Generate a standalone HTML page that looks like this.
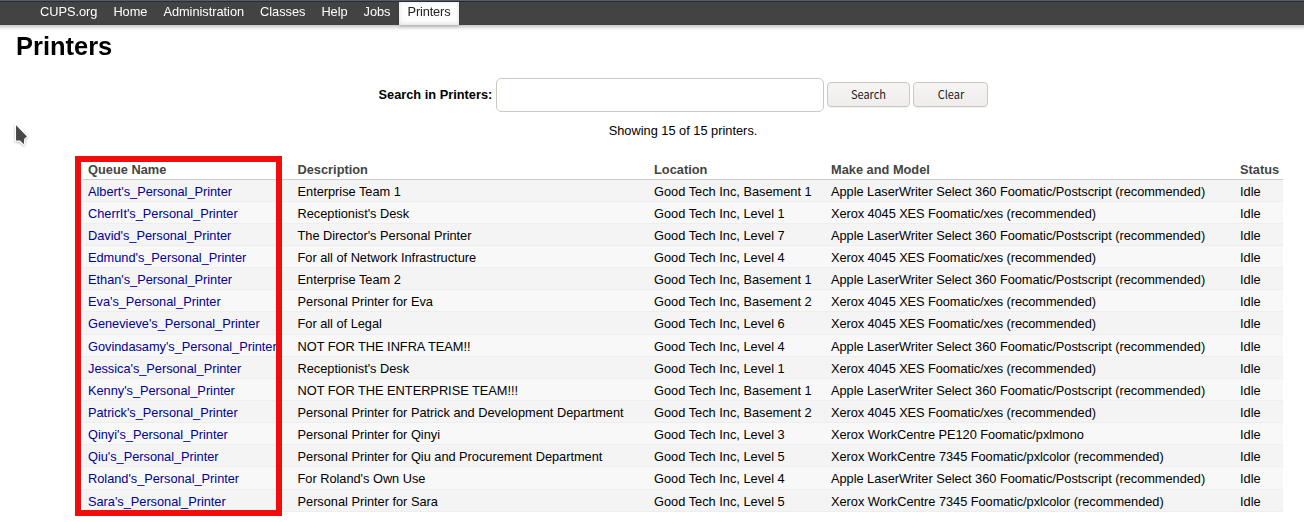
<!DOCTYPE html>
<html><head><meta charset="utf-8"><title>Printers - CUPS</title>
<style>
html,body{margin:0;padding:0;background:#fff;overflow:hidden}
body{width:1304px;height:522px;position:relative;font-family:"Liberation Sans",Arial,Helvetica,sans-serif;font-size:12.8px;color:#000}
.topline{position:absolute;left:0;top:0;width:1304px;height:1px;background:#5a5e6e;border-bottom:1px solid #2b2d3b}
.header{position:absolute;left:-10px;top:2px;width:1386px;height:22.7px;background:#434343;box-shadow:0 1.6px 4px rgba(0,0,0,.25);will-change:transform}
.header ul{list-style:none;margin:0;padding:0 0 0 42px}
.header li{float:left}
.header a{display:block;padding:3px 8px 5px;color:#fff;line-height:14.7px;white-space:nowrap;letter-spacing:-0.03px}
.header a.active{background:#fdfdfd;color:#222;padding-left:9px;padding-right:9px;letter-spacing:-0.15px;box-shadow:inset 0 -1px 4px rgba(0,0,0,.13),0 1.6px 4px rgba(0,0,0,.12)}
h1{position:absolute;left:16.45px;top:30.6px;margin:0;font-size:25.6px;line-height:30px;font-weight:bold;transform:scale(.995,1.04);transform-origin:0 24.1px}
.search{position:absolute;left:378px;top:78px;height:34px;white-space:nowrap}
.search b{position:absolute;left:.5px;top:8.8px;line-height:15px}
.search .inp{position:absolute;left:118px;top:0;width:326px;height:32px;border:1px solid #cdc7c2;border-radius:5px;background:#fff}
.btn{position:absolute;top:4px;height:23px;border:1px solid #cdc7c2;border-radius:4px;background:linear-gradient(#f6f5f4,#eeedec);box-shadow:0 1px 0 rgba(0,0,0,.06);font-family:"Noto Sans CJK SC","DejaVu Sans",sans-serif;font-size:11.6px;line-height:22px;text-align:center;color:#1a1a1a}
.btn span{display:inline-block;transform:scaleX(.948)}
.showing{position:absolute;left:0;width:1366px;top:123px;text-align:center;line-height:15px}
table{position:absolute;left:82.7px;top:156px;width:1200px;border-collapse:collapse;table-layout:fixed}
th{border-bottom:1px solid #ccc;color:#444;padding:6px 0 2px 5.33px;text-align:left;vertical-align:bottom;white-space:nowrap;font-weight:bold;height:15px;line-height:15px}
td{border-bottom:1px solid #eee;padding:4px 0 0 5.33px;white-space:nowrap;height:17px;line-height:16px;vertical-align:top;overflow:visible;letter-spacing:-0.03px}
tr.x td{height:18px}
td.d{letter-spacing:-0.02px}
td.l{letter-spacing:0}
tr:nth-child(even){background:#f8f8f8}
tr:nth-child(odd){background:#f4f4f4}
thead tr{background:#fff !important}
td a{color:#000099}
.red{position:absolute;left:75px;top:156px;width:195px;height:348px;border:6px solid #f20d0d}
.cursor{position:absolute;left:10px;top:120px}
</style></head><body>
<div class="topline"></div>
<div class="header"><ul>
<li><a>CUPS.org</a></li><li><a>Home</a></li><li><a>Administration</a></li><li><a>Classes</a></li><li><a>Help</a></li><li><a>Jobs</a></li><li><a class="active">Printers</a></li>
</ul></div>
<h1>Printers</h1>
<div class="search"><b>Search in Printers:</b><div class="inp"></div>
<div class="btn" style="left:449px;width:81px"><span>Search</span></div>
<div class="btn" style="left:535px;width:73px"><span>Clear</span></div></div>
<div class="showing">Showing 15 of 15 printers.</div>
<table>
<colgroup><col style="width:209.5px"><col style="width:356.5px"><col style="width:177px"><col style="width:409px"><col style="width:48px"></colgroup>
<thead><tr><th>Queue Name</th><th>Description</th><th>Location</th><th>Make and Model</th><th>Status</th></tr></thead>
<tbody>
<tr><td><a>Albert's_Personal_Printer</a></td><td class="d">Enterprise Team 1</td><td class="l">Good Tech Inc, Basement 1</td><td style="letter-spacing:-0.03px">Apple LaserWriter Select 360 Foomatic/Postscript (recommended)</td><td>Idle</td></tr>
<tr><td><a>CherrIt's_Personal_Printer</a></td><td class="d">Receptionist's Desk</td><td class="l">Good Tech Inc, Level 1</td><td style="letter-spacing:-0.08px">Xerox 4045 XES Foomatic/xes (recommended)</td><td>Idle</td></tr>
<tr><td><a>David's_Personal_Printer</a></td><td class="d">The Director's Personal Printer</td><td class="l">Good Tech Inc, Level 7</td><td style="letter-spacing:-0.03px">Apple LaserWriter Select 360 Foomatic/Postscript (recommended)</td><td>Idle</td></tr>
<tr><td><a>Edmund's_Personal_Printer</a></td><td class="d">For all of Network Infrastructure</td><td class="l">Good Tech Inc, Level 4</td><td style="letter-spacing:-0.08px">Xerox 4045 XES Foomatic/xes (recommended)</td><td>Idle</td></tr>
<tr><td><a>Ethan's_Personal_Printer</a></td><td class="d">Enterprise Team 2</td><td class="l">Good Tech Inc, Basement 1</td><td style="letter-spacing:-0.03px">Apple LaserWriter Select 360 Foomatic/Postscript (recommended)</td><td>Idle</td></tr>
<tr><td><a>Eva's_Personal_Printer</a></td><td class="d">Personal Printer for Eva</td><td class="l">Good Tech Inc, Basement 2</td><td style="letter-spacing:-0.08px">Xerox 4045 XES Foomatic/xes (recommended)</td><td>Idle</td></tr>
<tr class="x"><td><a>Genevieve's_Personal_Printer</a></td><td class="d">For all of Legal</td><td class="l">Good Tech Inc, Level 6</td><td style="letter-spacing:-0.08px">Xerox 4045 XES Foomatic/xes (recommended)</td><td>Idle</td></tr>
<tr><td><a>Govindasamy's_Personal_Printer</a></td><td class="d">NOT FOR THE INFRA TEAM!!</td><td class="l">Good Tech Inc, Level 4</td><td style="letter-spacing:-0.03px">Apple LaserWriter Select 360 Foomatic/Postscript (recommended)</td><td>Idle</td></tr>
<tr><td><a>Jessica's_Personal_Printer</a></td><td class="d">Receptionist's Desk</td><td class="l">Good Tech Inc, Level 1</td><td style="letter-spacing:-0.08px">Xerox 4045 XES Foomatic/xes (recommended)</td><td>Idle</td></tr>
<tr><td><a>Kenny's_Personal_Printer</a></td><td class="d">NOT FOR THE ENTERPRISE TEAM!!!</td><td class="l">Good Tech Inc, Basement 1</td><td style="letter-spacing:-0.03px">Apple LaserWriter Select 360 Foomatic/Postscript (recommended)</td><td>Idle</td></tr>
<tr><td><a>Patrick's_Personal_Printer</a></td><td class="d">Personal Printer for Patrick and Development Department</td><td class="l">Good Tech Inc, Basement 2</td><td style="letter-spacing:-0.08px">Xerox 4045 XES Foomatic/xes (recommended)</td><td>Idle</td></tr>
<tr><td><a>Qinyi's_Personal_Printer</a></td><td class="d">Personal Printer for Qinyi</td><td class="l">Good Tech Inc, Level 3</td><td style="letter-spacing:-0.06px">Xerox WorkCentre PE120 Foomatic/pxlmono</td><td>Idle</td></tr>
<tr><td><a>Qiu's_Personal_Printer</a></td><td class="d">Personal Printer for Qiu and Procurement Department</td><td class="l">Good Tech Inc, Level 5</td><td style="letter-spacing:-0.04px">Xerox WorkCentre 7345 Foomatic/pxlcolor (recommended)</td><td>Idle</td></tr>
<tr class="x"><td><a>Roland's_Personal_Printer</a></td><td class="d">For Roland's Own Use</td><td class="l">Good Tech Inc, Level 4</td><td style="letter-spacing:-0.03px">Apple LaserWriter Select 360 Foomatic/Postscript (recommended)</td><td>Idle</td></tr>
<tr><td><a>Sara's_Personal_Printer</a></td><td class="d">Personal Printer for Sara</td><td class="l">Good Tech Inc, Level 5</td><td style="letter-spacing:-0.04px">Xerox WorkCentre 7345 Foomatic/pxlcolor (recommended)</td><td>Idle</td></tr>
</tbody></table>
<div class="red"></div>
<svg class="cursor" width="30" height="34" viewBox="0 0 30 34"><path d="M6.03 5.17 L16.95 16.38 L14.25 18.68 L13.8 24.2 L10.06 20.6 L6.03 20.6 Z" fill="#484848" stroke="#fff" stroke-width="2.2" stroke-linejoin="round" paint-order="stroke fill" style="filter:drop-shadow(0.6px 1px 1.2px rgba(0,0,0,.28))"/></svg>
</body></html>
